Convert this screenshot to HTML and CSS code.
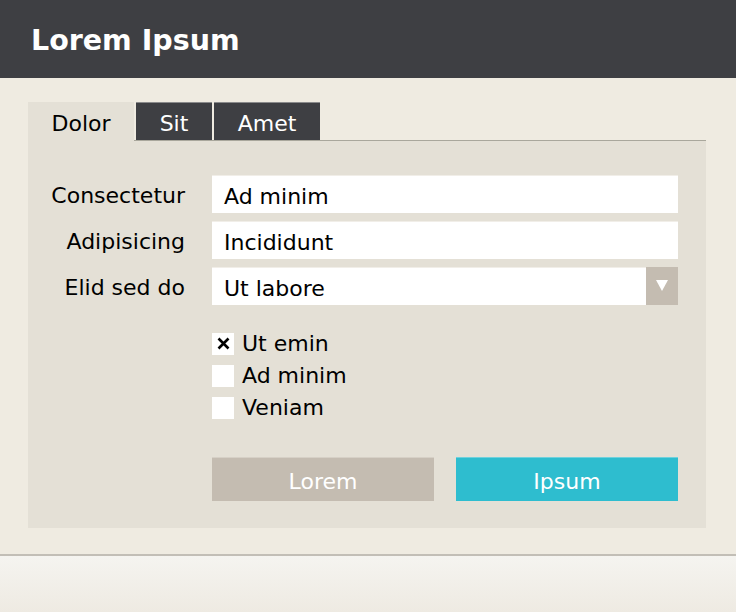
FILE: index.html
```html
<!DOCTYPE html>
<html lang="en">
<head>
<meta charset="utf-8">
<title>Lorem Ipsum</title>
<link rel="stylesheet" href="styles.css">
</head>
<body>
<header class="topbar">
  <h1 class="title">Lorem Ipsum</h1>
</header>
<main class="main">
  <nav class="tabs">
    <div class="tab tab-active">Dolor</div>
    <div class="tab tab-sit">Sit</div>
    <div class="tab tab-amet">Amet</div>
  </nav>
  <section class="panel">
    <div class="form">
      <div class="label">Consectetur</div>
      <div class="field">Ad minim</div>
      <div class="label">Adipisicing</div>
      <div class="field">Incididunt</div>
      <div class="label">Elid sed do</div>
      <div class="field select">
        <span class="select-value">Ut labore</span>
        <span class="select-btn">
          <svg width="12" height="11" viewBox="0 0 12 11"><polygon points="0,0 12,0 6,11" fill="#ffffff"/></svg>
        </span>
      </div>
    </div>
    <div class="checks">
      <div class="check">
        <span class="box">
          <svg width="13" height="13" viewBox="0 0 13 13"><path d="M1.5 1.5 L11.5 11.5 M11.5 1.5 L1.5 11.5" stroke="#000" stroke-width="2.6" fill="none"/></svg>
        </span>
        <span class="check-label">Ut emin</span>
      </div>
      <div class="check">
        <span class="box"></span>
        <span class="check-label">Ad minim</span>
      </div>
      <div class="check">
        <span class="box"></span>
        <span class="check-label">Veniam</span>
      </div>
    </div>
    <div class="buttons">
      <div class="btn btn-secondary">Lorem</div>
      <div class="btn btn-primary">Ipsum</div>
    </div>
  </section>
</main>
<footer class="footer"></footer>
</body>
</html>
```
FILE: styles.css
```css
* { box-sizing: border-box; }
html, body { margin: 0; padding: 0; }
body {
  width: 736px;
  height: 612px;
  overflow: hidden;
  background: #efebe1;
  font-family: "DejaVu Sans", Verdana, sans-serif;
  font-size: 22px;
  color: #000;
  display: flex;
  flex-direction: column;
}
.topbar {
  height: 78px;
  background: #3e3f43;
  padding: 3px 0 0 31px;
}
.title {
  margin: 0;
  font-size: 28.5px;
  font-weight: bold;
  line-height: 75px;
  color: #ffffff;
}
.main {
  padding: 24px 30px 26px 28px;
}
.tabs {
  display: flex;
  height: 39px;
  border-bottom: 1px solid #a9a79c;
}
.tab {
  height: 38px;
  padding-top: 4px;
  line-height: 34px;
  text-align: center;
  background: #3e3f43;
  color: #ffffff;
  border-top: 1px solid #8a8a8b;
}
.tab-active {
  width: 106px;
  height: 39px;
  background: #e4e0d6;
  color: #000;
  border-top: none;
  padding-top: 5px;
  margin-right: 2px;
}
.tab-sit { width: 76px; margin-right: 2px; }
.tab-amet { width: 106px; }
.panel {
  background: #e4e0d6;
  padding: 34px 28px 27px 28px;
}
.form {
  display: grid;
  grid-template-columns: 129px 1fr;
  column-gap: 27px;
  row-gap: 8px;
}
.label {
  height: 38px;
  padding-top: 3px;
  line-height: 35px;
  display: flex;
  justify-content: flex-end;
  white-space: nowrap;
}
.field {
  height: 38px;
  padding: 3px 12px 0;
  line-height: 35px;
  background: #ffffff;
  border-top: 1px solid #f1eee8;
}
.select {
  display: flex;
  padding-right: 0;
}
.select-value { flex: 1; }
.select-btn {
  width: 32px;
  height: 38px;
  margin-top: -4px;
  background: #c4bcb1;
  display: flex;
  align-items: center;
  justify-content: center;
}
.select-btn svg { margin-top: -1px; }
.checks {
  margin: 28px 0 0 156px;
  display: flex;
  flex-direction: column;
  gap: 10px;
}
.check {
  display: flex;
  align-items: flex-start;
  gap: 8px;
  height: 22px;
}
.box {
  width: 22px;
  height: 22px;
  background: #ffffff;
  display: flex;
  align-items: center;
  justify-content: center;
}
.box svg { margin-top: -2px; }
.check-label {
  line-height: 22px;
  height: 22px;
  white-space: nowrap;
}
.buttons {
  margin: 38px 0 0 156px;
  display: flex;
  gap: 22px;
}
.btn {
  width: 222px;
  height: 44px;
  padding-top: 4px;
  line-height: 40px;
  text-align: center;
  color: #ffffff;
}
.btn-secondary {
  background: #c4bcb1;
  border-top: 1px solid #d6d0c6;
}
.btn-primary {
  background: #2ebdcf;
  border-top: 1px solid #6fd1dc;
}
.footer {
  flex: 1;
  border-top: 2px solid #c2beb6;
  background: linear-gradient(to bottom, #f5f4f0, #eeeae2);
}
```
